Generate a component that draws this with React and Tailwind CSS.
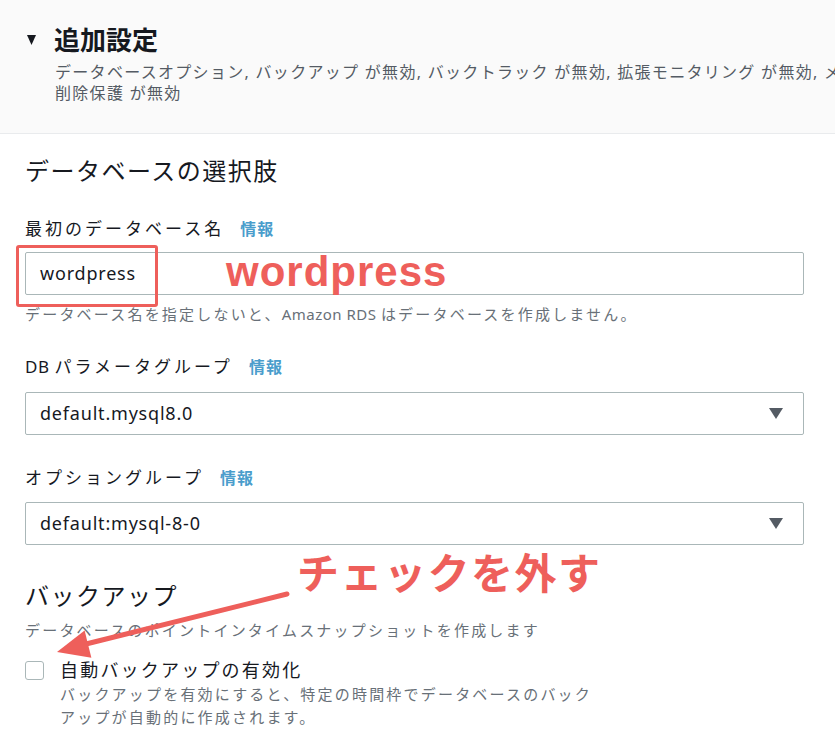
export default function App() {
  const Info = () => (
    <span className="ml-[16px] text-[16px] font-bold tracking-[1px] text-[#4a9dcc]">情報</span>
  );
  const Caret = () => (
    <svg width="14" height="11" viewBox="0 0 14 11" className="shrink-0">
      <polygon points="0,0 14,0 7,11" fill="#545b64" />
    </svg>
  );
  return (
    <div className="relative w-[835px] h-[742px] overflow-hidden bg-white font-['Noto_Sans','Noto_Sans_CJK_JP',sans-serif] text-[#16191f]">
      {/* header */}
      <div className="h-[134px] bg-[#fafafa] border-b border-[#e9ebed] pl-[27px] pt-[23px]">
        <div className="flex items-center h-[34px]">
          <svg width="9" height="10" viewBox="0 0 9 10">
            <polygon points="0,0 9,0 4.5,10" fill="#16191f" />
          </svg>
          <span className="ml-[18px] text-[26px] font-bold leading-[34px]">追加設定</span>
        </div>
        <div className="mt-[5px] pl-[28px] text-[16px] leading-[21px] tracking-[1.3px] text-[#545b64] whitespace-nowrap">
          <div>データベースオプション, バックアップ が無効, バックトラック が無効, 拡張モニタリング が無効, メンテナンス が無効</div>
          <div>削除保護 が無効</div>
        </div>
      </div>

      {/* main */}
      <div className="flex flex-col pl-[25px] pr-[31px]">
        <div className="mt-[20px] text-[24px] leading-[34px] tracking-[1.5px]">データベースの選択肢</div>

        <div className="mt-[29px] flex items-center h-[24px]">
          <span className="text-[17px] leading-[24px] tracking-[3px]">最初のデータベース名</span>
          <Info />
        </div>
        <div className="mt-[11px] h-[43px] border border-[#aab7b8] rounded-[2px] flex items-center pl-[14px] text-[18px] tracking-[0.8px]">
          wordpress
        </div>
        <div className="mt-[8px] text-[15px] leading-[22px] tracking-[2.2px] text-[#687078] whitespace-nowrap">
          データベース名を指定しないと、<span className="tracking-[0.5px]">Amazon RDS </span>はデータベースを作成しません。
        </div>

        <div className="mt-[30px] flex items-center h-[24px]">
          <span className="text-[17px] leading-[24px] tracking-[3px]">
            <span className="tracking-[0.5px]">DB </span>パラメータグループ
          </span>
          <Info />
        </div>
        <div className="mt-[13px] h-[43px] border border-[#aab7b8] rounded-[2px] flex items-center justify-between pl-[14px] pr-[20px] text-[18px] tracking-[0.8px]">
          <span>default.mysql8.0</span>
          <Caret />
        </div>

        <div className="mt-[31px] flex items-center h-[24px]">
          <span className="text-[17px] leading-[24px] tracking-[3px]">オプショングループ</span>
          <Info />
        </div>
        <div className="mt-[12px] h-[43px] border border-[#aab7b8] rounded-[2px] flex items-center justify-between pl-[14px] pr-[20px] text-[18px] tracking-[0.8px]">
          <span>default:mysql-8-0</span>
          <Caret />
        </div>

        <div className="mt-[34px] text-[24px] leading-[34px] tracking-[1.5px]">バックアップ</div>
        <div className="mt-[6px] text-[15px] leading-[22px] tracking-[2.2px] text-[#687078] whitespace-nowrap">
          データベースのポイントインタイムスナップショットを作成します
        </div>

        <div className="mt-[16px] flex items-center h-[26px]">
          <span className="w-[19px] h-[19px] border border-[#aab7b8] rounded-[3px] bg-white shrink-0" />
          <span className="ml-[16px] text-[18px] leading-[26px] tracking-[2.2px]">自動バックアップの有効化</span>
        </div>
        <div className="pl-[35px] text-[15px] leading-[23px] tracking-[2.2px] text-[#687078] whitespace-nowrap">
          バックアップを有効にすると、特定の時間枠でデータベースのバック
          <br />
          アップが自動的に作成されます。
        </div>
      </div>

      {/* annotations */}
      <div className="absolute left-[16px] top-[245px] w-[142px] h-[62px] border-[3px] border-[#ee5f5b] rounded-[3px]" />
      <div className="absolute left-[226px] top-[251px] text-[42px] leading-none font-bold tracking-[1px] text-[#ee5f5b] font-['Liberation_Sans',Arial,sans-serif]">
        wordpress
      </div>
      <div className="absolute left-[297px] top-[550px] text-[42px] leading-none font-bold tracking-[1.5px] text-[#ee5f5b] font-['Noto_Sans_CJK_JP',sans-serif]">
        チェックを外す
      </div>
      <svg className="absolute left-0 top-0 pointer-events-none" width="835" height="742" viewBox="0 0 835 742">
        <line x1="287" y1="594" x2="86" y2="644" stroke="#ee5f5b" strokeWidth="5" strokeLinecap="round" />
        <polygon points="57,652 84.6,630.6 91.4,657.8" fill="#ee5f5b" />
      </svg>
    </div>
  );
}
